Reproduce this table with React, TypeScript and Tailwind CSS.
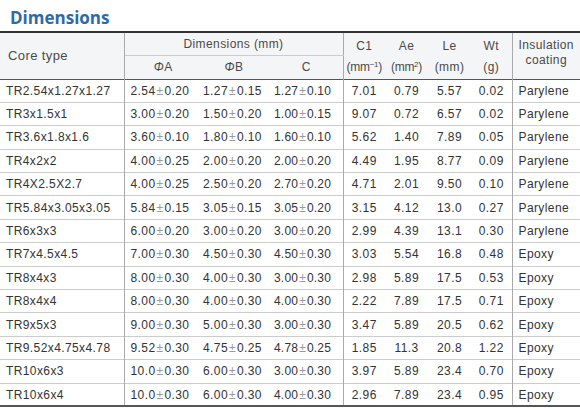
const rows: [string, string, string, string, string, string, string, string, string][] = [
  ["TR2.54x1.27x1.27", "2.54|0.20", "1.27|0.15", "1.27|0.10", "7.01", "0.79", "5.57", "0.02", "Parylene"],
  ["TR3x1.5x1", "3.00|0.20", "1.50|0.20", "1.00|0.15", "9.07", "0.72", "6.57", "0.02", "Parylene"],
  ["TR3.6x1.8x1.6", "3.60|0.10", "1.80|0.10", "1.60|0.10", "5.62", "1.40", "7.89", "0.05", "Parylene"],
  ["TR4x2x2", "4.00|0.25", "2.00|0.20", "2.00|0.20", "4.49", "1.95", "8.77", "0.09", "Parylene"],
  ["TR4X2.5X2.7", "4.00|0.25", "2.50|0.20", "2.70|0.20", "4.71", "2.01", "9.50", "0.10", "Parylene"],
  ["TR5.84x3.05x3.05", "5.84|0.15", "3.05|0.15", "3.05|0.20", "3.15", "4.12", "13.0", "0.27", "Parylene"],
  ["TR6x3x3", "6.00|0.20", "3.00|0.20", "3.00|0.20", "2.99", "4.39", "13.1", "0.30", "Parylene"],
  ["TR7x4.5x4.5", "7.00|0.30", "4.50|0.30", "4.50|0.30", "3.03", "5.54", "16.8", "0.48", "Epoxy"],
  ["TR8x4x3", "8.00|0.30", "4.00|0.30", "3.00|0.30", "2.98", "5.89", "17.5", "0.53", "Epoxy"],
  ["TR8x4x4", "8.00|0.30", "4.00|0.30", "4.00|0.30", "2.22", "7.89", "17.5", "0.71", "Epoxy"],
  ["TR9x5x3", "9.00|0.30", "5.00|0.30", "3.00|0.30", "3.47", "5.89", "20.5", "0.62", "Epoxy"],
  ["TR9.52x4.75x4.78", "9.52|0.30", "4.75|0.25", "4.78|0.25", "1.85", "11.3", "20.8", "1.22", "Epoxy"],
  ["TR10x6x3", "10.0|0.30", "6.00|0.30", "3.00|0.30", "3.97", "5.89", "23.4", "0.70", "Epoxy"],
  ["TR10x6x4", "10.0|0.30", "6.00|0.30", "4.00|0.30", "2.96", "7.89", "23.4", "0.95", "Epoxy"],
];

const Tol = ({ v }: { v: string }) => {
  const [a, b] = v.split("|");
  return (
    <span>
      {a}
      <span className="text-[#999] mx-[1px]">±</span>
      {b}
    </span>
  );
};

export default function App() {
  return (
    <div className="w-[580px] h-[410px] overflow-hidden bg-white font-['Liberation_Sans',Arial,sans-serif] text-[12px] text-[#333] tracking-[0.4px]">
      <div className="h-[31px] pl-[10px] pt-[8px] text-[17px] leading-[20px] font-bold text-[#2f6aa7] font-['Open_Sans','Liberation_Sans',sans-serif] tracking-normal">
        Dimensions
      </div>
      <table className="w-[580px] table-fixed border-collapse border-t-2 border-t-[#333]">
        <colgroup>
          <col className="w-[124px]" />
          <col className="w-[74px]" />
          <col className="w-[72px]" />
          <col className="w-[73px]" />
          <col className="w-[42px]" />
          <col className="w-[43px]" />
          <col className="w-[43px]" />
          <col className="w-[41px]" />
          <col className="w-[68px]" />
        </colgroup>
        <thead className="bg-[#f4f5f6] text-[#4a4a4a]">
          <tr className="h-[23px]">
            <th rowSpan={2} className="text-left font-normal text-[13px] pl-[8px] border-r border-r-[#aaa]">
              Core type
            </th>
            <th colSpan={3} className="font-normal border-b border-b-[#ccc] border-r border-r-[#aaa]">
              Dimensions (mm)
            </th>
            <th className="font-normal pt-[3px]">C1</th>
            <th className="font-normal pt-[3px]">Ae</th>
            <th className="font-normal pt-[3px]">Le</th>
            <th className="font-normal pt-[3px] border-r border-r-[#aaa]">Wt</th>
            <th rowSpan={2} className="font-normal leading-[15px] pb-[6px]">
              Insulation
              <br />
              coating
            </th>
          </tr>
          <tr className="h-[24px] border-b border-b-[#555]">
            <th className="font-normal pl-[4px]"><i>Φ</i>A</th>
            <th className="font-normal"><i>Φ</i>B</th>
            <th className="font-normal border-r border-r-[#aaa]">C</th>
            <th className="font-normal whitespace-nowrap tracking-[-0.3px]">
              (mm<sup className="text-[8px]">−1</sup>)
            </th>
            <th className="font-normal whitespace-nowrap tracking-[-0.3px]">
              (mm<sup className="text-[8px]">2</sup>)
            </th>
            <th className="font-normal">(mm)</th>
            <th className="font-normal border-r border-r-[#aaa]">(g)</th>
          </tr>
        </thead>
        <tbody className="border-b-2 border-b-[#555]">
          {rows.map((r) => (
            <tr key={r[0]} className="h-[23.4px] border-b border-b-[#ccc] last:border-b-0">
              <td className="pl-[6px] border-r border-r-[#aaa] whitespace-nowrap">{r[0]}</td>
              <td className="pl-[6px] whitespace-nowrap"><Tol v={r[1]} /></td>
              <td className="pl-[5px] whitespace-nowrap"><Tol v={r[2]} /></td>
              <td className="pl-[4px] border-r border-r-[#aaa] whitespace-nowrap tracking-[0.2px]"><Tol v={r[3]} /></td>
              <td className="text-center">{r[4]}</td>
              <td className="text-center">{r[5]}</td>
              <td className="text-center">{r[6]}</td>
              <td className="text-center border-r border-r-[#aaa]">{r[7]}</td>
              <td className="pl-[6px]">{r[8]}</td>
            </tr>
          ))}
        </tbody>
      </table>
    </div>
  );
}
